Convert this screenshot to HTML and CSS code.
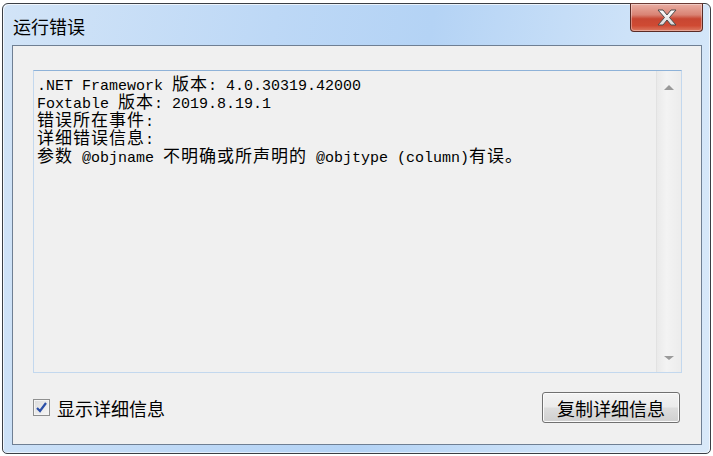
FILE: index.html
```html
<!DOCTYPE html>
<html>

<head>
  <title>运行错误</title>
  <link rel="stylesheet" href="styles.css">
</head>

<body>
  <div class="window">
    <div class="titlebar">
      <span class="title">运行错误</span>
      <button class="close-btn">
        <svg width="20" height="17" viewBox="-1 -1 20 17">
          <defs>
            <linearGradient id="xg" x1="0" y1="0" x2="0" y2="1">
              <stop offset="0" stop-color="#ffffff" />
              <stop offset="1" stop-color="#d8d8d8" />
            </linearGradient>
          </defs>
          <polygon points="0,0 5,0 9,5 13,0 18,0 11.5,7.5 18,15 13,15 9,10 5,15 0,15 6.5,7.5" fill="url(#xg)" stroke="#4b4b4b" stroke-width="1" stroke-linejoin="round" />
        </svg>
      </button>
    </div>

    <div class="client">
      <div class="textbox">
        <div class="text">
          <div class="line">.NET Framework <span class="cjk">版本</span>: 4.0.30319.42000</div>
          <div class="line">Foxtable <span class="cjk">版本</span>: 2019.8.19.1</div>
          <div class="line"><span class="cjk">错误所在事件</span>:</div>
          <div class="line"><span class="cjk">详细错误信息</span>:</div>
          <div class="line"><span class="cjk">参数</span> @objname <span class="cjk">不明确或所声明的</span> @objtype (column)<span class="cjk">有误。</span></div>
        </div>
        <div class="scrollbar">
          <span class="arrow up"></span>
          <span class="arrow down"></span>
        </div>
      </div>

      <div class="footer">
        <label class="check">
          <span class="check-box">
            <svg width="11" height="11" viewBox="0 0 11 11">
              <path d="M1 6 L4 9 L10 1" fill="none" stroke="#2b4fa8" stroke-width="2.2" />
            </svg>
          </span>
          显示详细信息
        </label>
        <button class="copy-btn">复制详细信息</button>
      </div>
    </div>
  </div>
</body>

</html>
```

FILE: styles.css
```css
body {
  margin: 0;
  padding: 3px 0 0 2px;
  background-color: #ffffff;
  font-family: "Noto Sans CJK SC", sans-serif;
}

/* 窗口外框 */
.window {
  width: 707px;
  height: 449px;
  border: 1px solid #3b3f45;
  border-radius: 6px 6px 5px 5px;
  background: linear-gradient(100deg, #d2e4f7 0%, #bdd8f6 35%, #b4d3f5 55%, #cde2f8 80%, #d9e9f9 100%);
  box-shadow: inset 1px 1px 0 rgba(255, 255, 255, 0.7), inset -1px -1px 0 rgba(255, 255, 255, 0.6);
  display: flex;
  flex-direction: column;
}

.titlebar {
  height: 41px;
  display: flex;
  justify-content: space-between;
  align-items: flex-start;
  padding-left: 10px;
}

.title {
  padding-top: 13px;
  font-size: 18px;
  line-height: 18px;
  color: #000;
}

.close-btn {
  width: 73px;
  height: 29px;
  margin-top: -1px;
  margin-right: 7px;
  padding: 0;
  border: 1px solid #5a2b26;
  border-top-color: #6b3a34;
  border-radius: 0 0 4px 4px;
  background: linear-gradient(#e9aea3 0%, #d98374 40%, #c84632 55%, #cf4a33 80%, #dc7a62 100%);
  box-shadow: inset 0 0 0 1px rgba(255, 255, 255, 0.35);
  display: flex;
  justify-content: center;
  align-items: center;
}

/* 客户区 */
.client {
  margin: 0 8px 0 9px;
  height: 398px;
  border: 1px solid #6f7f93;
  background-color: #f0f0f0;
}

.textbox {
  margin: 24px 19px 0 20px;
  height: 301px;
  border: 1px solid #c3d8ee;
  border-top-color: #8eb2d8;
  display: flex;
}

.text {
  flex: 1;
  padding: 3px 0 0 3px;
  font-family: "Liberation Mono", monospace;
  font-size: 15px;
  color: #000;
}

.line {
  height: 18px;
  line-height: 18px;
  white-space: pre;
}

/* 中文字符按两个半角宽度排 */
.cjk {
  display: inline-block;
  height: 18px;
  line-height: 18px;
  font-family: "Noto Sans CJK SC", sans-serif;
  font-size: 17px;
  letter-spacing: 1px;
}

.scrollbar {
  width: 24px;
  border-left: 1px solid #e2e2e2;
  background: linear-gradient(90deg, #eaeaea, #f3f3f3 40%, #ececec);
  display: flex;
  flex-direction: column;
  justify-content: space-between;
  align-items: center;
  padding: 14px 0 12px;
}

.arrow {
  width: 0;
  height: 0;
  border-left: 5px solid transparent;
  border-right: 5px solid transparent;
}

.arrow.up {
  border-bottom: 5px solid #9a9a9a;
}

.arrow.down {
  border-top: 4px solid #9a9a9a;
}

.footer {
  margin-top: 19px;
  padding: 0 21px 0 20px;
  display: flex;
  justify-content: space-between;
  align-items: center;
}

.check {
  display: flex;
  align-items: center;
  gap: 7px;
  font-size: 18px;
  color: #000;
}

.check-box {
  width: 15px;
  height: 15px;
  border: 1px solid #8e8f8f;
  background: linear-gradient(135deg, #dcdcdc, #f6f6f6);
  box-shadow: inset 0 0 0 1px #f4f4f4;
  display: flex;
  justify-content: center;
  align-items: center;
}

.copy-btn {
  width: 138px;
  height: 31px;
  padding: 0;
  border: 1px solid #707070;
  border-radius: 3px;
  background: linear-gradient(#f3f3f3 0%, #ebebeb 48%, #dddddd 52%, #cfcfcf 100%);
  box-shadow: inset 0 0 0 1px #fbfbfb;
  font-family: "Noto Sans CJK SC", sans-serif;
  font-size: 18px;
  color: #000;
}
```
